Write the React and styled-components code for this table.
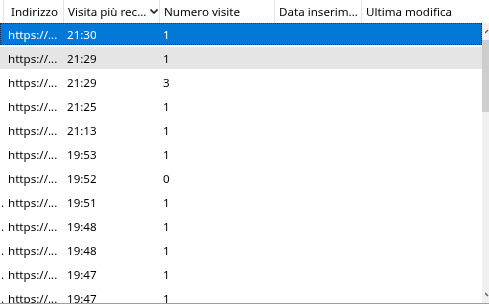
import React from 'react';
import styled, { createGlobalStyle } from 'styled-components';

const GlobalStyle = createGlobalStyle`
  html, body {
    margin: 0;
    padding: 0;
    background: #fff;
  }
  body {
    font-family: "Noto Sans", "Liberation Sans", sans-serif;
    font-size: 11.6px;
    color: #000;
  }
`;

const COLS = [4, 60, 96, 115, 87, 120];

const Frame = styled.div`
  width: 489px;
  height: 306px;
  overflow: hidden;
  background: #fff;
  will-change: transform;
`;

const ListView = styled.div`
  display: flex;
  height: 303px;
  border-bottom: 1px solid #a0a0a0;
  overflow: hidden;
`;

const Body = styled.div`
  width: 482px;
  overflow: hidden;
`;

const HeaderRow = styled.div`
  display: flex;
  height: 23px;
`;

const HeaderCell = styled.div`
  width: ${({ w }) => w}px;
  flex: none;
  box-sizing: border-box;
  padding-left: ${({ pad }) => pad}px;
  border-right: 1px solid #e5e5e5;
  display: flex;
  align-items: center;
  white-space: nowrap;
  overflow: hidden;
  &:last-child {
    border-right: none;
  }
`;

const SortArrow = styled.svg`
  margin-left: 4px;
  flex: none;
`;

const Row = styled.div`
  height: 24px;
  box-sizing: border-box;
  padding-bottom: 2px;
`;

const RowFill = styled.div`
  display: flex;
  height: 22px;
  box-sizing: border-box;
  background: ${({ selected, hover }) => (selected ? '#0078d7' : hover ? '#e5e5e5' : 'transparent')};
  color: ${({ selected }) => (selected ? '#fff' : '#000')};
  border: 1px dotted ${({ selected }) => (selected ? '#0a2a55' : 'transparent')};
`;

const Cell = styled.div`
  width: ${({ w }) => w}px;
  flex: none;
  box-sizing: border-box;
  padding-left: ${({ pad }) => pad}px;
  display: flex;
  align-items: center;
  white-space: nowrap;
  overflow: hidden;
`;

const Scrollbar = styled.div`
  width: 7px;
  flex: none;
  margin-top: 23px;
  background: #f0f0f0;
  display: flex;
  flex-direction: column;
  align-items: flex-start;
`;

const Arrow = styled.div`
  height: 17px;
  display: flex;
  align-items: center;
  padding-left: 3px;
`;

const Thumb = styled.div`
  width: 7px;
  height: 72px;
  background: #cdcdcd;
`;

const Spacer = styled.div`
  flex: 1;
`;

const rows = [
  ['21:30', '1'],
  ['21:29', '1'],
  ['21:29', '3'],
  ['21:25', '1'],
  ['21:13', '1'],
  ['19:53', '1'],
  ['19:52', '0'],
  ['19:51', '1'],
  ['19:48', '1'],
  ['19:48', '1'],
  ['19:47', '1'],
  ['19:47', '1'],
];

const headers = ['', 'Indirizzo', 'Visita più rec...', 'Numero visite', 'Data inserim...', 'Ultima modifica'];

export default function App() {
  return (
    <Frame>
      <GlobalStyle />
      <ListView>
        <Body>
          <HeaderRow>
            {headers.map((h, i) => (
              <HeaderCell key={i} w={COLS[i]} pad={i === 0 ? 0 : i === 1 ? 7 : 4}>
                {h}
                {i === 2 && (
                  <SortArrow width="8" height="5" viewBox="0 0 8 5">
                    <path d="M0.5 0.5 L4 4 L7.5 0.5" fill="none" stroke="#222" strokeWidth="1.6" />
                  </SortArrow>
                )}
              </HeaderCell>
            ))}
          </HeaderRow>
          {rows.map(([time, visits], i) => (
            <Row key={i}>
              <RowFill selected={i === 0} hover={i === 1}>
                <Cell w={COLS[0] - 1} pad={0}>{i >= 7 ? '.' : ''}</Cell>
                <Cell w={COLS[1]} pad={4}>https://...</Cell>
                <Cell w={COLS[2]} pad={3}>{time}</Cell>
                <Cell w={COLS[3]} pad={3}>{visits}</Cell>
                <Cell w={COLS[4]} pad={3} />
                <Cell w={COLS[5]} pad={3} />
              </RowFill>
            </Row>
          ))}
        </Body>
        <Scrollbar>
          <Arrow>
            <svg width="4" height="5" viewBox="0 0 4 5">
              <path d="M0 4 L3 1" stroke="#606060" strokeWidth="1.5" fill="none" />
            </svg>
          </Arrow>
          <Thumb />
          <Spacer />
          <Arrow>
            <svg width="4" height="5" viewBox="0 0 4 5">
              <path d="M0 1 L3 4" stroke="#606060" strokeWidth="1.5" fill="none" />
            </svg>
          </Arrow>
        </Scrollbar>
      </ListView>
    </Frame>
  );
}
